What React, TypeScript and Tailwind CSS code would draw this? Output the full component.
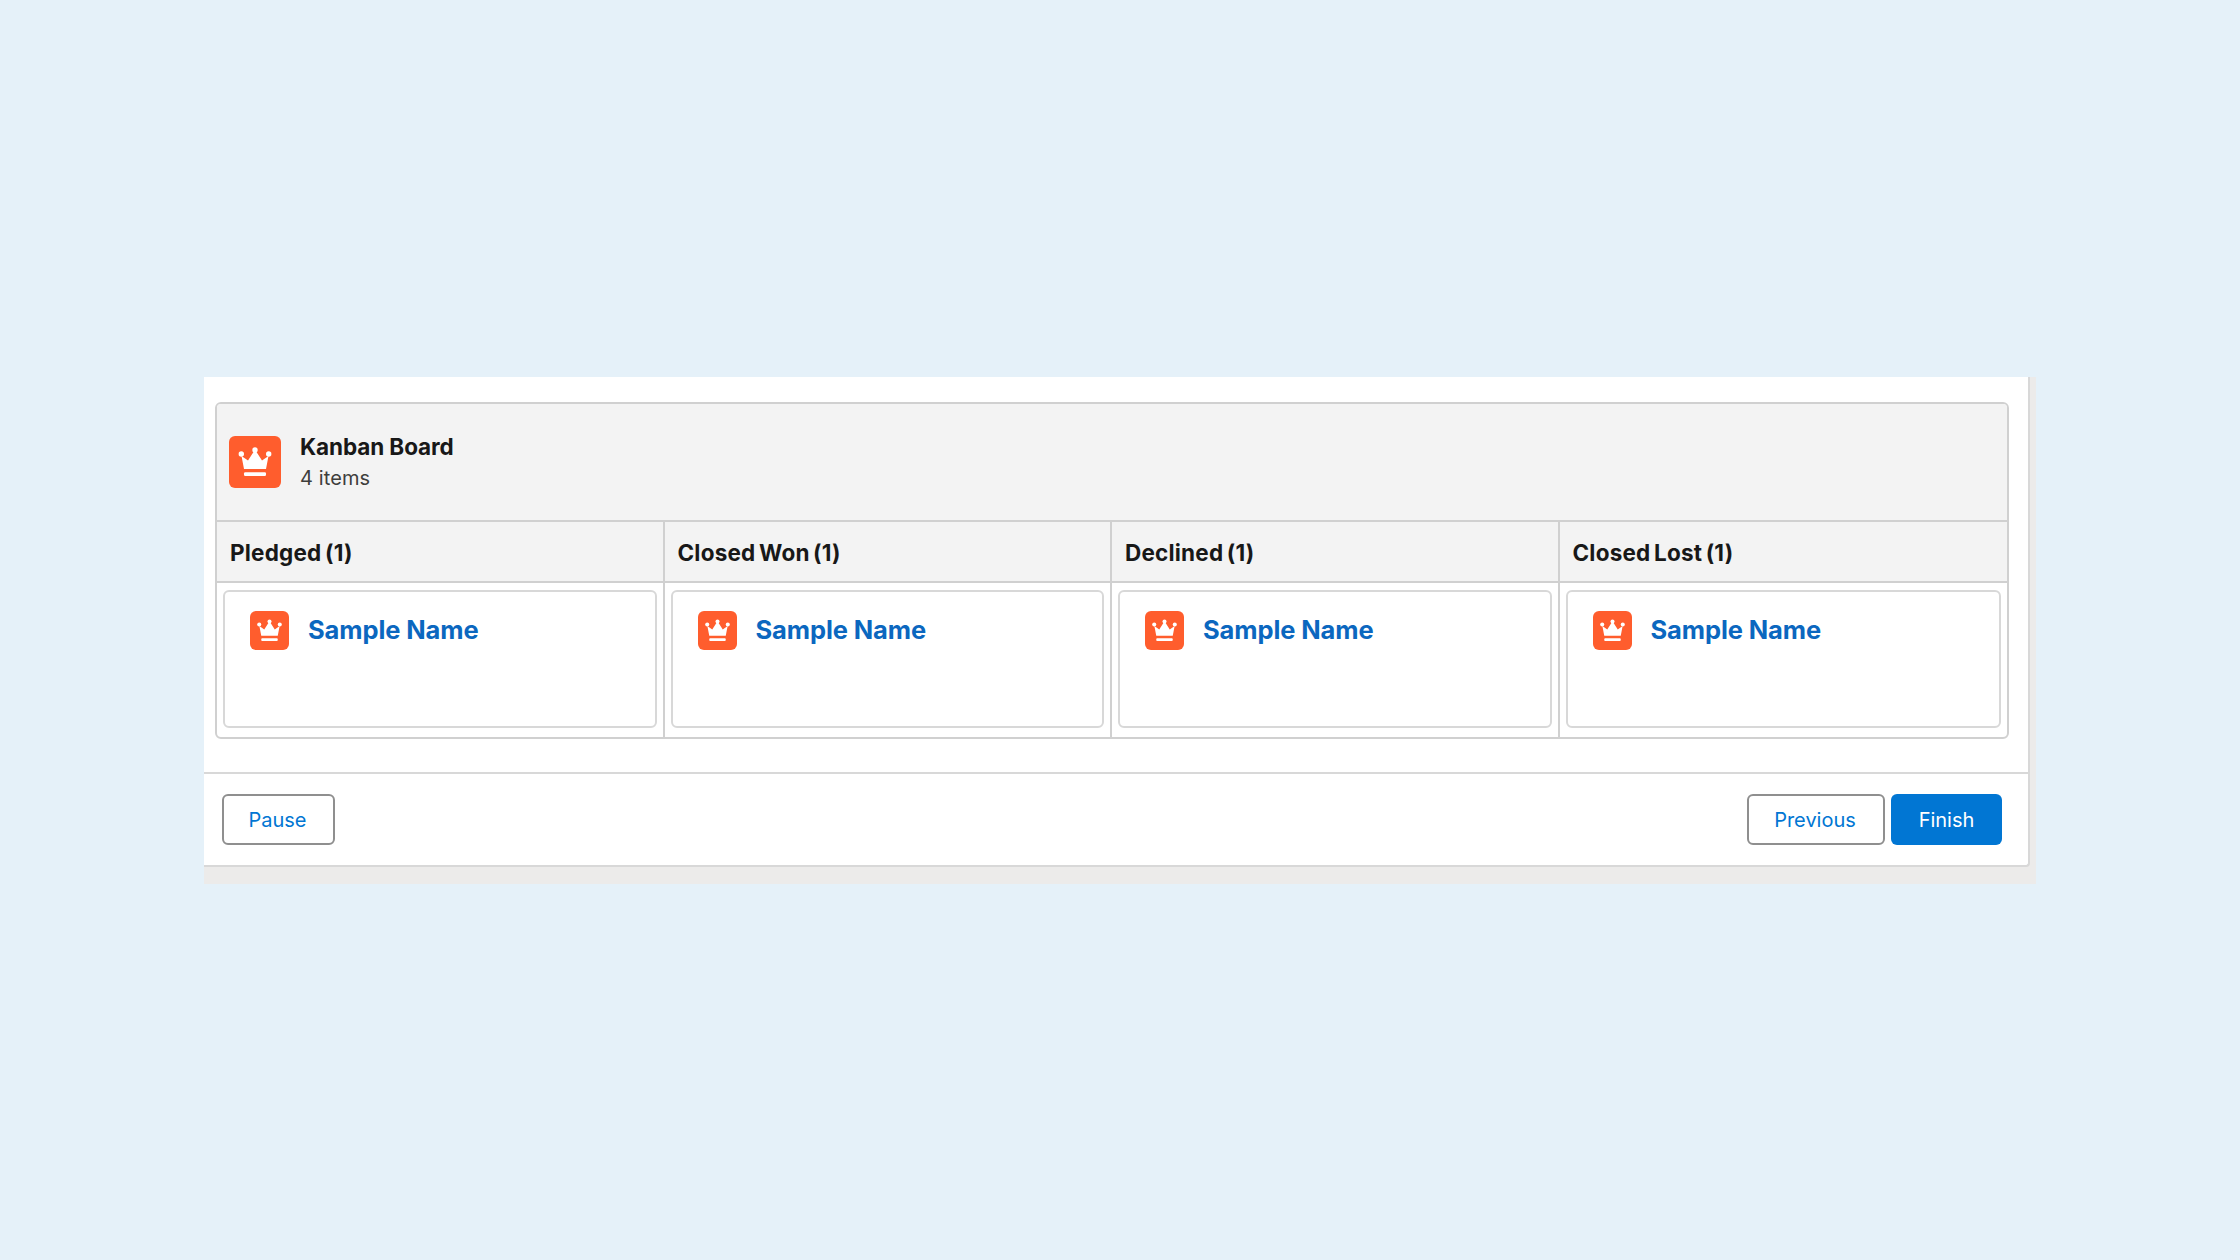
const columns = ['Pledged (1)', 'Closed Won (1)', 'Declined (1)', 'Closed Lost (1)']

function CrownIcon({ className }: { className: string }) {
  return (
    <div className={`flex shrink-0 items-center justify-center bg-[#ff5d2d] ${className}`}>
      <svg viewBox="0 0 52 52" className="h-full w-full" fill="#fff">
        <circle cx="12.3" cy="18" r="2.7" />
        <circle cx="26" cy="14" r="2.7" />
        <circle cx="39.7" cy="18" r="2.7" />
        <path d="M15 33 L12.5 20 L19 24.5 L24.5 16 H27.5 L33 24.5 L39.5 20 L37 33 Z" />
        <rect x="15" y="36.3" width="22" height="3.6" rx="1.2" />
      </svg>
    </div>
  )
}

export default function App() {
  return (
    <div className="h-[1260px] bg-[#e5f1f9] pt-[377px] pl-[204px] font-['Inter',sans-serif]">
      {/* Card with the flat offset shadow */}
      <div className="h-[507px] w-[1832px] bg-[#ecebea] pr-[6px]">
        <div className="h-[490px] rounded-br bg-white border-r-2 border-b-2 border-[#d8d8d8]">
          <div className="pl-[11px] pt-[25px]">
            <div className="w-[1794px] h-[337px] overflow-hidden rounded-md border-2 border-[#d0d0d0]">
              {/* Header */}
              <div className="flex h-[118px] items-center gap-[19px] border-b-2 border-[#d0d0d0] bg-[#f3f3f3] pl-[12px]">
                <CrownIcon className="h-[52px] w-[52px] rounded-md" />
                <div>
                  <div className="text-[22.5px] leading-[32px] font-bold tracking-[-0.1px] text-[#181818]">Kanban Board</div>
                  <div className="text-[20px] leading-[30px] tracking-[0.1px] text-[#3e3e3c]">4 items</div>
                </div>
              </div>

              {/* Columns */}
              <div className="grid h-[215px] grid-cols-4">
                {columns.map((name, i) => (
                  <div key={name} className={`flex flex-col ${i < 3 ? 'border-r-2 border-[#d0d0d0]' : ''}`}>
                    <div className="flex h-[61px] items-center border-b-2 border-[#d0d0d0] bg-[#f3f3f3] pl-[13px] pt-[2px] text-[22.5px] font-bold tracking-[0.2px] [word-spacing:-2px] text-[#181818]">
                      {name}
                    </div>
                    <div className="px-[6px] pt-[7px]">
                      <div className="h-[138px] rounded-md border-2 border-[#d8d8d8] bg-white pl-[25px] pt-[19px]">
                        <div className="flex items-center gap-[19px]">
                          <CrownIcon className="h-[39px] w-[39px] rounded-md" />
                          <a href="#" className="text-[25.5px] font-bold tracking-[-0.1px] text-[#0b67bf]">Sample Name</a>
                        </div>
                      </div>
                    </div>
                  </div>
                ))}
              </div>
            </div>
          </div>

          {/* Footer */}
          <div className="mt-[33px] flex items-center justify-between border-t-2 border-[#d8d8d8] pl-[18px] pr-[26px] pt-[20px]">
            <button className="h-[51px] w-[113px] rounded-md border-2 border-[#8f8f8f] bg-white pr-[2px] text-[20px] text-[#0176d3]">Pause</button>
            <div className="flex gap-[6px]">
              <button className="h-[51px] w-[138px] rounded-md border-2 border-[#8f8f8f] bg-white pr-[2px] text-[20px] text-[#0176d3]">Previous</button>
              <button className="h-[51px] w-[111px] rounded-md bg-[#0176d3] text-[20px] text-white">Finish</button>
            </div>
          </div>
        </div>
      </div>
    </div>
  )
}
